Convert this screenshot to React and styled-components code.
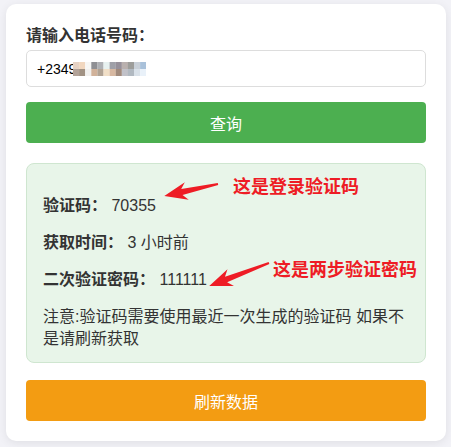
import styled, { createGlobalStyle } from 'styled-components';

const GlobalStyle = createGlobalStyle`
	html, body {
		margin: 0;
		padding: 0;
		background: #f2f2f7;
	}
	body {
		font-family: 'Liberation Sans', 'Noto Sans CJK SC', sans-serif;
		color: #333;
	}
`;

const Page = styled.div`
	min-height: 100vh;
	box-sizing: border-box;
	padding: 4px 0 6px 6px;
`;

const Card = styled.div`
	width: 440px;
	box-sizing: border-box;
	padding: 20px;
	background: #fff;
	border-radius: 10px;
	box-shadow: 0 2px 10px rgba(0, 0, 0, 0.08);
	display: flex;
	flex-direction: column;
`;

const Label = styled.label`
	display: block;
	font-size: 16px;
	font-weight: bold;
	line-height: 24px;
	margin-bottom: 2px;
	color: #333;
`;

const InputBox = styled.div`
	height: 37px;
	box-sizing: border-box;
	border: 1px solid #ddd;
	border-radius: 5px;
	padding: 0 10px;
	display: flex;
	align-items: center;
	font-size: 14px;
	color: #000;
`;

const Mosaic = styled.svg`
	display: block;
	margin-left: -3px;
`;

const Button = styled.button`
	display: block;
	width: 100%;
	height: 41px;
	margin-top: ${(props) => props.top || '15px'};
	border: none;
	border-radius: 4px;
	background: ${(props) => props.bg};
	color: #fff;
	font-family: 'Liberation Sans', 'Noto Sans CJK SC', sans-serif;
	font-size: 16px;
	cursor: pointer;
`;

const ResultBox = styled.div`
	position: relative;
	margin-top: 20px;
	padding: 31px 16px 12px;
	background: #e8f5e9;
	border: 1px solid #cfe6d0;
	border-radius: 8px;
	display: flex;
	flex-direction: column;
	gap: 15px;
`;

const Row = styled.p`
	margin: 0;
	font-size: 16px;
	line-height: 22px;
	color: #333;
`;

const RowLabel = styled.strong`
	font-weight: bold;
`;

const Note = styled.p`
	margin: 0;
	font-size: 16px;
	line-height: 22px;
	color: #333;
`;

const Overlay = styled.svg`
	position: absolute;
	left: 0;
	top: 0;
	pointer-events: none;
	overflow: visible;
`;

const Remark = styled.span`
	position: absolute;
	left: ${(props) => props.x}px;
	top: ${(props) => props.y}px;
	font-size: 18px;
	font-weight: bold;
	line-height: 24px;
	color: #ee1c25;
	white-space: nowrap;
`;

const mosaic = [
	['#e6d2c4', '#f1d7bf', '#f7f7f5', '#8f9094', '#aeb0b4', '#e7f1f0', '#9fa0a8', '#96909a', '#b9b0ae', '#9d9d9a', '#c9d0d8', '#a9c1da'],
	['#b3a399', '#a19283', '#f1f0ee', '#d1b29a', '#b1a394', '#f1dfc7', '#d7b8a1', '#a18a7c', '#c1c1c8', '#b1b9c1', '#d9e1e9', '#e9f1f9'],
];

const Arrow = ({ x, y, length, angle }) => {
	const L = length;
	const points = `0,-1 ${L - 18},-3 ${L - 23},-9 ${L},0 ${L - 23},9 ${L - 18},3 0,1`;
	return <polygon points={points} fill="#ee1c25" transform={`translate(${x} ${y}) rotate(${angle})`} />;
};

const App = () => {
	return (
		<Page>
			<GlobalStyle />
			<Card>
				<Label>请输入电话号码：</Label>
				<InputBox>
					<span>+2349</span>
					<Mosaic width="73" height="14" viewBox="0 0 73 14">
						{mosaic.map((row, r) =>
							row.map((c, i) => <rect key={`${r}-${i}`} x={i * 6.1} y={r * 7} width="6.2" height="7" fill={c} />)
						)}
					</Mosaic>
				</InputBox>
				<Button bg="#4caf50">查询</Button>
				<ResultBox>
					<Row>
						<RowLabel>验证码：</RowLabel> 70355
					</Row>
					<Row>
						<RowLabel>获取时间：</RowLabel> 3 小时前
					</Row>
					<Row>
						<RowLabel>二次验证密码：</RowLabel> 111111
					</Row>
					<Note>注意:验证码需要使用最近一次生成的验证码 如果不是请刷新获取</Note>
					<Overlay width="400" height="200">
						<Arrow x={191} y={20} length={55} angle={167.5} />
						<Arrow x={242} y={99} length={64} angle={159} />
					</Overlay>
					<Remark x={206} y={11}>这是登录验证码</Remark>
					<Remark x={246} y={94}>这是两步验证密码</Remark>
				</ResultBox>
				<Button bg="#f39c12" top="17px">刷新数据</Button>
			</Card>
		</Page>
	);
};

export default App;
